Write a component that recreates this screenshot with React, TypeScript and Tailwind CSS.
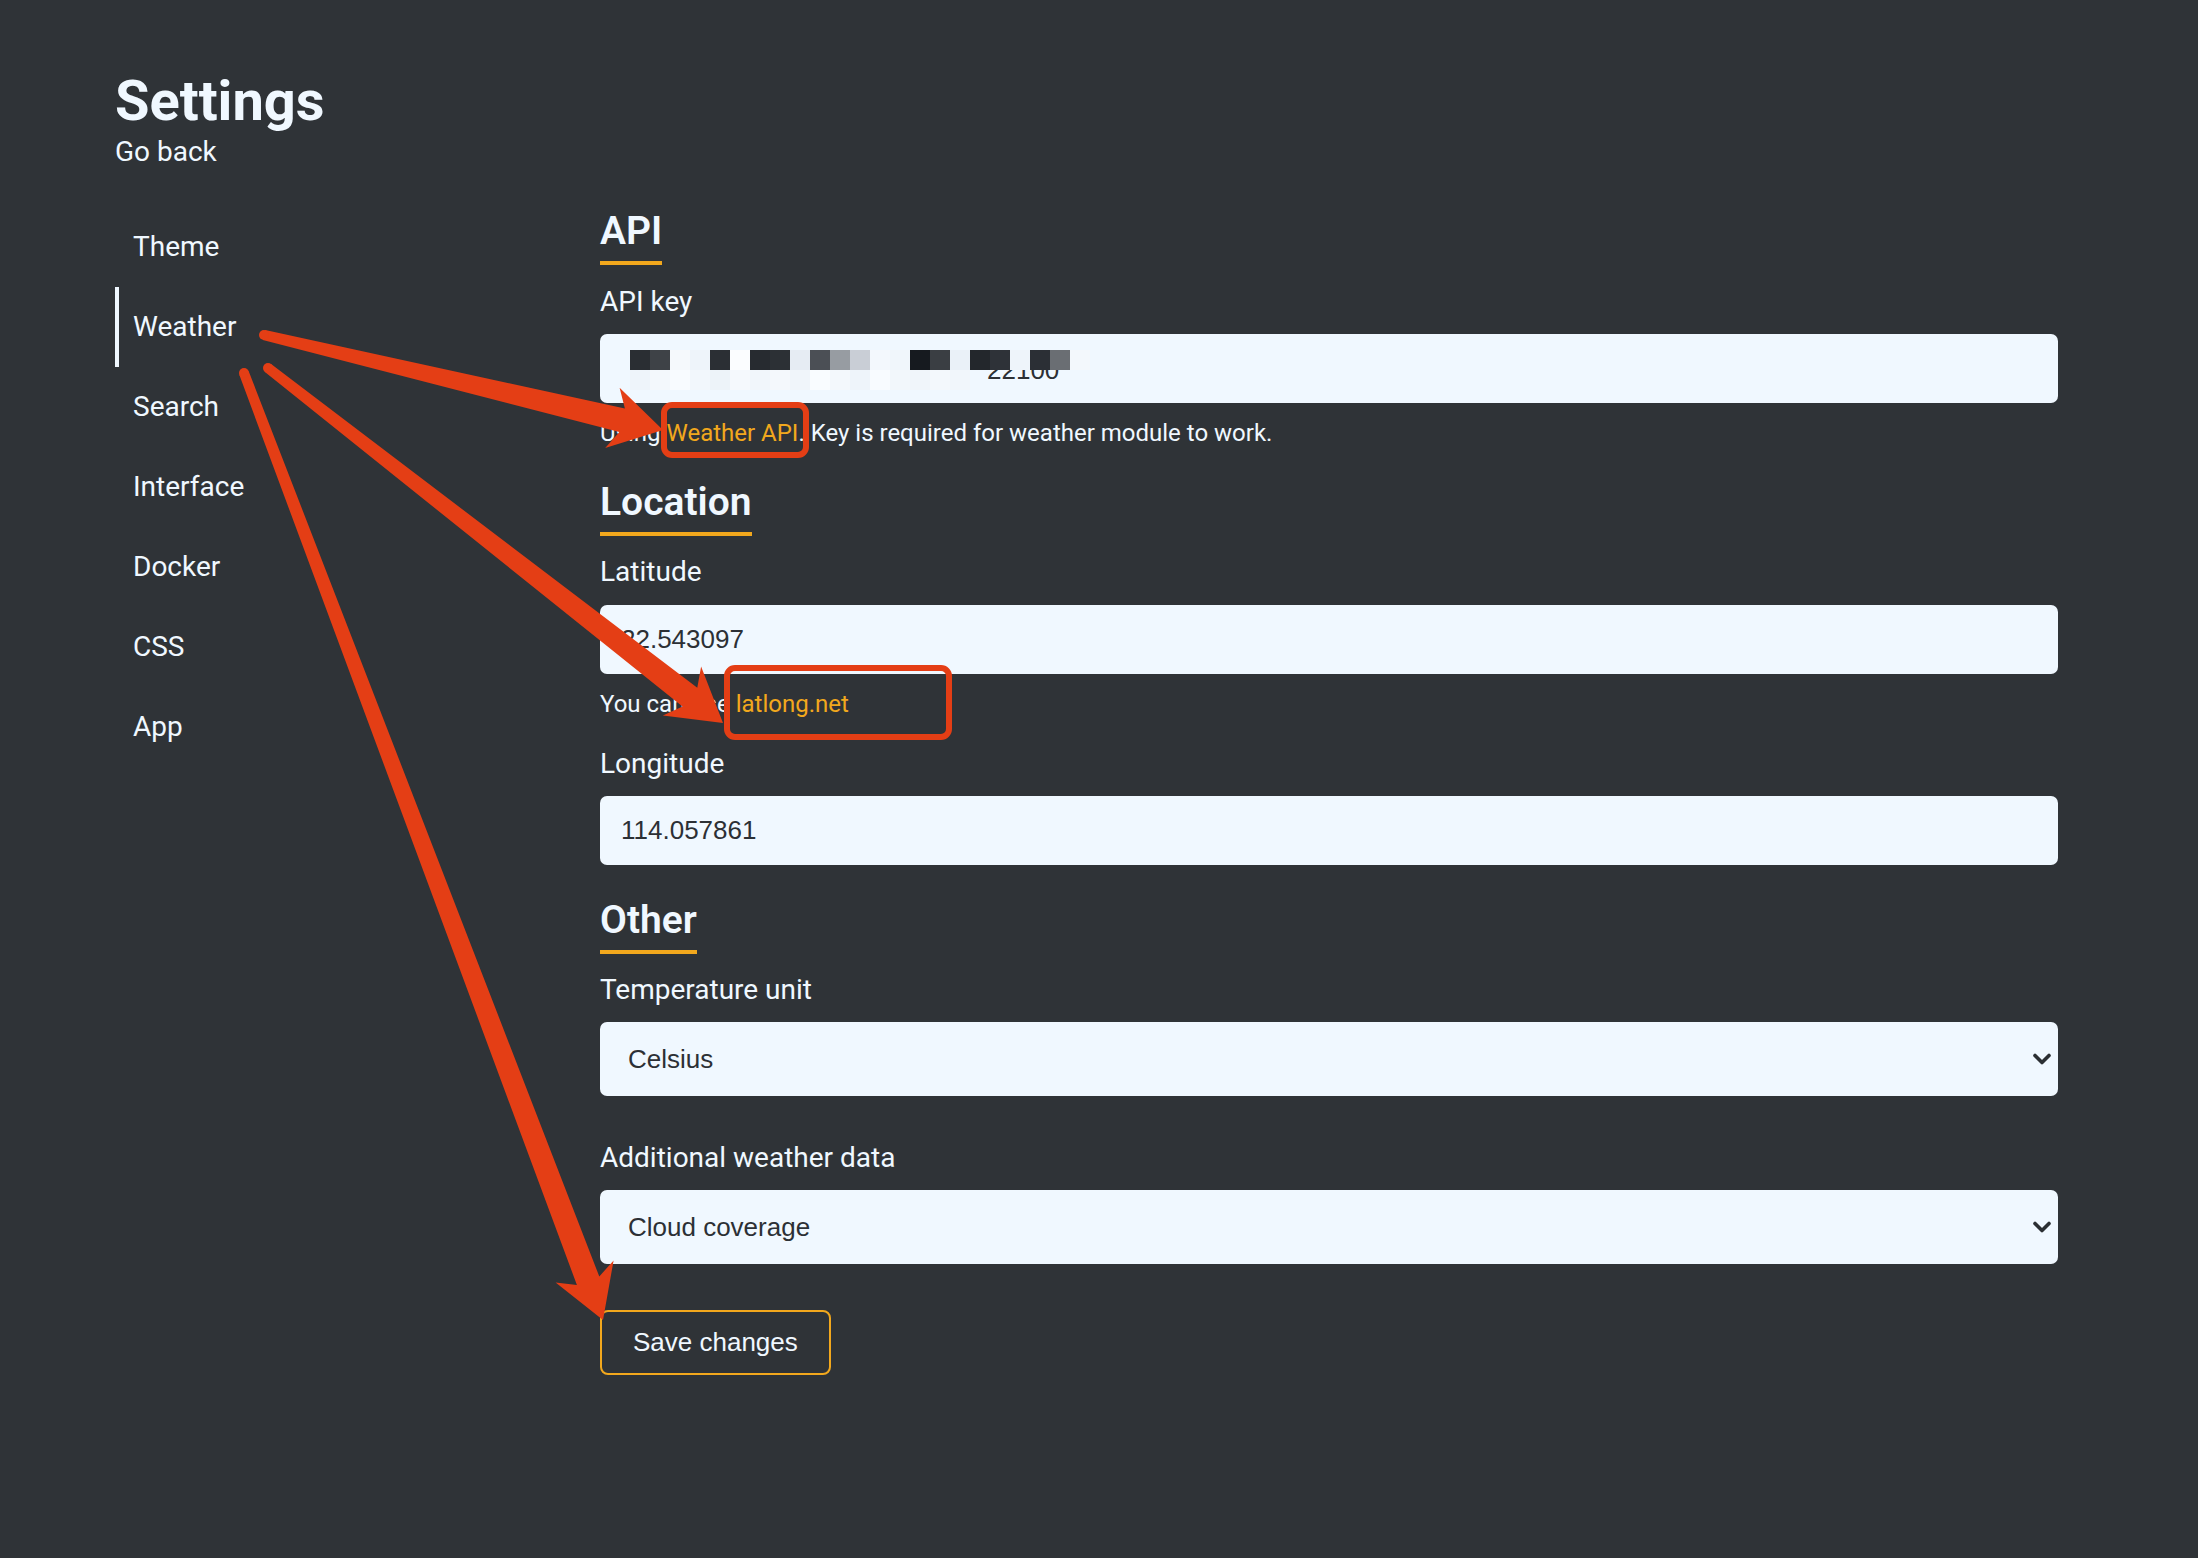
import React from "react";

type Pt = [number, number];

function arrowPath(T: Pt, P: Pt, w0 = 5, w1 = 12, L = 52, W = 31): string {
  const dx = P[0] - T[0];
  const dy = P[1] - T[1];
  const len = Math.hypot(dx, dy);
  const ux = dx / len;
  const uy = dy / len;
  const nx = -uy;
  const ny = ux;
  const B: Pt = [P[0] - ux * (L - 10), P[1] - uy * (L - 10)];
  const C: Pt = [P[0] - ux * L, P[1] - uy * L];
  const pts: Pt[] = [
    [T[0] + nx * w0, T[1] + ny * w0],
    [B[0] + nx * w1, B[1] + ny * w1],
    [C[0] + nx * W, C[1] + ny * W],
    P,
    [C[0] - nx * W, C[1] - ny * W],
    [B[0] - nx * w1, B[1] - ny * w1],
    [T[0] - nx * w0, T[1] - ny * w0],
  ];
  return "M" + pts.map((p) => `${p[0].toFixed(1)} ${p[1].toFixed(1)}`).join(" L") + " Z";
}

const arrows: { T: Pt; P: Pt }[] = [
  { T: [264, 335], P: [663, 430] },
  { T: [268, 368], P: [723, 723] },
  { T: [244, 373], P: [603, 1320] },
];

const row1 = [
  "#2a2e33", "#3e4247", "#f5f9fc", "#eef4fa", "#2b2f34", "#fbfdff", "#272b30", "#2c3035",
  "#e6ecf3", "#4b4f55", "#979ca2", "#c9ced6", "#f3f8fd", "#f0f6fb", "#161a1f", "#3a3e43",
  "#eaf1f8", "#23272c", "#2e3238", "#eef4fa", "#2b2f35", "#6a6e73", "#f3f8fc",
];
const row2 = [
  "#eef4fa", "#f3f8fc", "#f8fbff", "#f2f7fc", "#edf3f9", "#f5f9fd", "#f1f6fb", "#f4f8fc",
  "#f0f5fa", "#f9fcff", "#f3f8fc", "#eef4fa", "#f8fbff", "#f2f7fb", "#f0f5fa", "#f3f8fc",
  "#f1f6fb",
];

function Mosaic() {
  return (
    <svg className="absolute left-[30px] top-[16px]" width={460} height={40} viewBox="0 0 460 40">
      {row2.map((c, i) => (
        <rect key={"b" + i} x={i * 20} y={20} width={20} height={20} fill={c} />
      ))}
      {row1.map((c, i) => (
        <rect key={"a" + i} x={i * 20} y={0} width={20} height={20} fill={c} />
      ))}
    </svg>
  );
}

function Chevron() {
  return (
    <svg
      className="absolute right-[7px] top-1/2 -translate-y-1/2 pointer-events-none"
      width={18}
      height={12}
      viewBox="0 0 18 12"
    >
      <path d="M2 2.5 L9 9.5 L16 2.5" fill="none" stroke="#2b2f33" strokeWidth={3.6} strokeLinecap="round" strokeLinejoin="round" />
    </svg>
  );
}

const inputCls =
  "block w-full h-[69px] rounded-[7px] bg-[#f0f8ff] text-[#2c3035] pl-[21px] text-[26px] font-['Liberation_Sans',Arial,sans-serif] outline-none border-0";

const headingCls =
  "self-start text-[39px] leading-[47px] font-semibold pb-[6px] border-b-4 border-[#f2a81d]";

const labelCls = "text-[28px] leading-[42px]";
const helpCls = "text-[24px] leading-[36px]";

function SelectBox({ value, options }: { value: string; options: string[] }) {
  return (
    <div className="relative mt-[11px]">
      <select
        defaultValue={value}
        className="block w-full h-[74px] appearance-none rounded-[7px] bg-[#f0f8ff] text-[#2c3035] pl-[28px] text-[26px] font-['Liberation_Sans',Arial,sans-serif] outline-none border-0"
      >
        {options.map((o) => (
          <option key={o}>{o}</option>
        ))}
      </select>
      <Chevron />
    </div>
  );
}

export default function App() {
  const nav = ["Theme", "Weather", "Search", "Interface", "Docker", "CSS", "App"];
  return (
    <div className="relative min-h-screen w-full bg-[#2f3337] text-[#f0f8ff] font-['Roboto',sans-serif]">
      <div className="pl-[115px] pr-[140px] pt-[73px] pb-[180px]">
        <h1 className="text-[56px] leading-[56px] font-bold">Settings</h1>
        <div className="mt-[3px] text-[28px] leading-[40px]">Go back</div>

        <div className="mt-[35px] flex">
          <nav className="w-[485px] shrink-0 flex flex-col">
            {nav.map((n) => (
              <div
                key={n}
                className={
                  "h-[80px] flex items-center pl-[14px] text-[28px] border-l-4 " +
                  (n === "Weather" ? "border-[#f0f8ff]" : "border-transparent")
                }
              >
                {n}
              </div>
            ))}
          </nav>

          <main className="flex-1 flex flex-col">
            <h2 className={headingCls + " mt-[1px]"}>API</h2>
            <label className={labelCls + " mt-[16px]"}>API key</label>
            <div className="relative mt-[11px]">
              <input className={inputCls} defaultValue="" />
              <div className="absolute left-[387px] top-[36px] h-[9px] overflow-hidden">
                <div className="mt-[-13px] leading-[26px] text-[26px] text-[#2c3035] font-['Liberation_Sans',Arial,sans-serif]">
                  22100
                </div>
              </div>
              <Mosaic />
            </div>
            <p className={helpCls + " mt-[12px]"}>
              Using <span className="text-[#f2a81d]">Weather API</span>. Key is required for weather module to work.
            </p>

            <h2 className={headingCls + " mt-[28px]"}>Location</h2>
            <label className={labelCls + " mt-[15px]"}>Latitude</label>
            <input className={inputCls + " mt-[12px]"} defaultValue="22.543097" />
            <p className={helpCls + " mt-[12px]"}>
              You can use <span className="text-[#f2a81d]">latlong.net</span>
            </p>
            <label className={labelCls + " mt-[21px]"}>Longitude</label>
            <input className={inputCls + " mt-[11px]"} defaultValue="114.057861" />

            <h2 className={headingCls + " mt-[32px]"}>Other</h2>
            <label className={labelCls + " mt-[15px]"}>Temperature unit</label>
            <SelectBox value="Celsius" options={["Celsius", "Fahrenheit"]} />
            <label className={labelCls + " mt-[41px]"}>Additional weather data</label>
            <SelectBox value="Cloud coverage" options={["Cloud coverage", "Humidity", "Wind speed"]} />

            <div className="mt-[46px]">
              <button className="h-[65px] px-[31px] rounded-[8px] border-2 border-[#f2a81d] bg-transparent text-[26px] text-[#f0f8ff] font-['Liberation_Sans',Arial,sans-serif]">
                Save changes
              </button>
            </div>
          </main>
        </div>
      </div>

      <svg
        className="absolute left-0 top-0 pointer-events-none"
        width={2198}
        height={1558}
        viewBox="0 0 2198 1558"
      >
        <rect x={664} y={405} width={142} height={50} rx={8} fill="none" stroke="#e43e15" strokeWidth={6} />
        <rect x={727} y={668} width={222} height={69} rx={8} fill="none" stroke="#e43e15" strokeWidth={6} />
        {arrows.map((a, i) => (
          <g key={i} fill="#e43e15">
            <path d={arrowPath(a.T, a.P)} />
            <circle cx={a.T[0]} cy={a.T[1]} r={5} />
          </g>
        ))}
      </svg>
    </div>
  );
}
